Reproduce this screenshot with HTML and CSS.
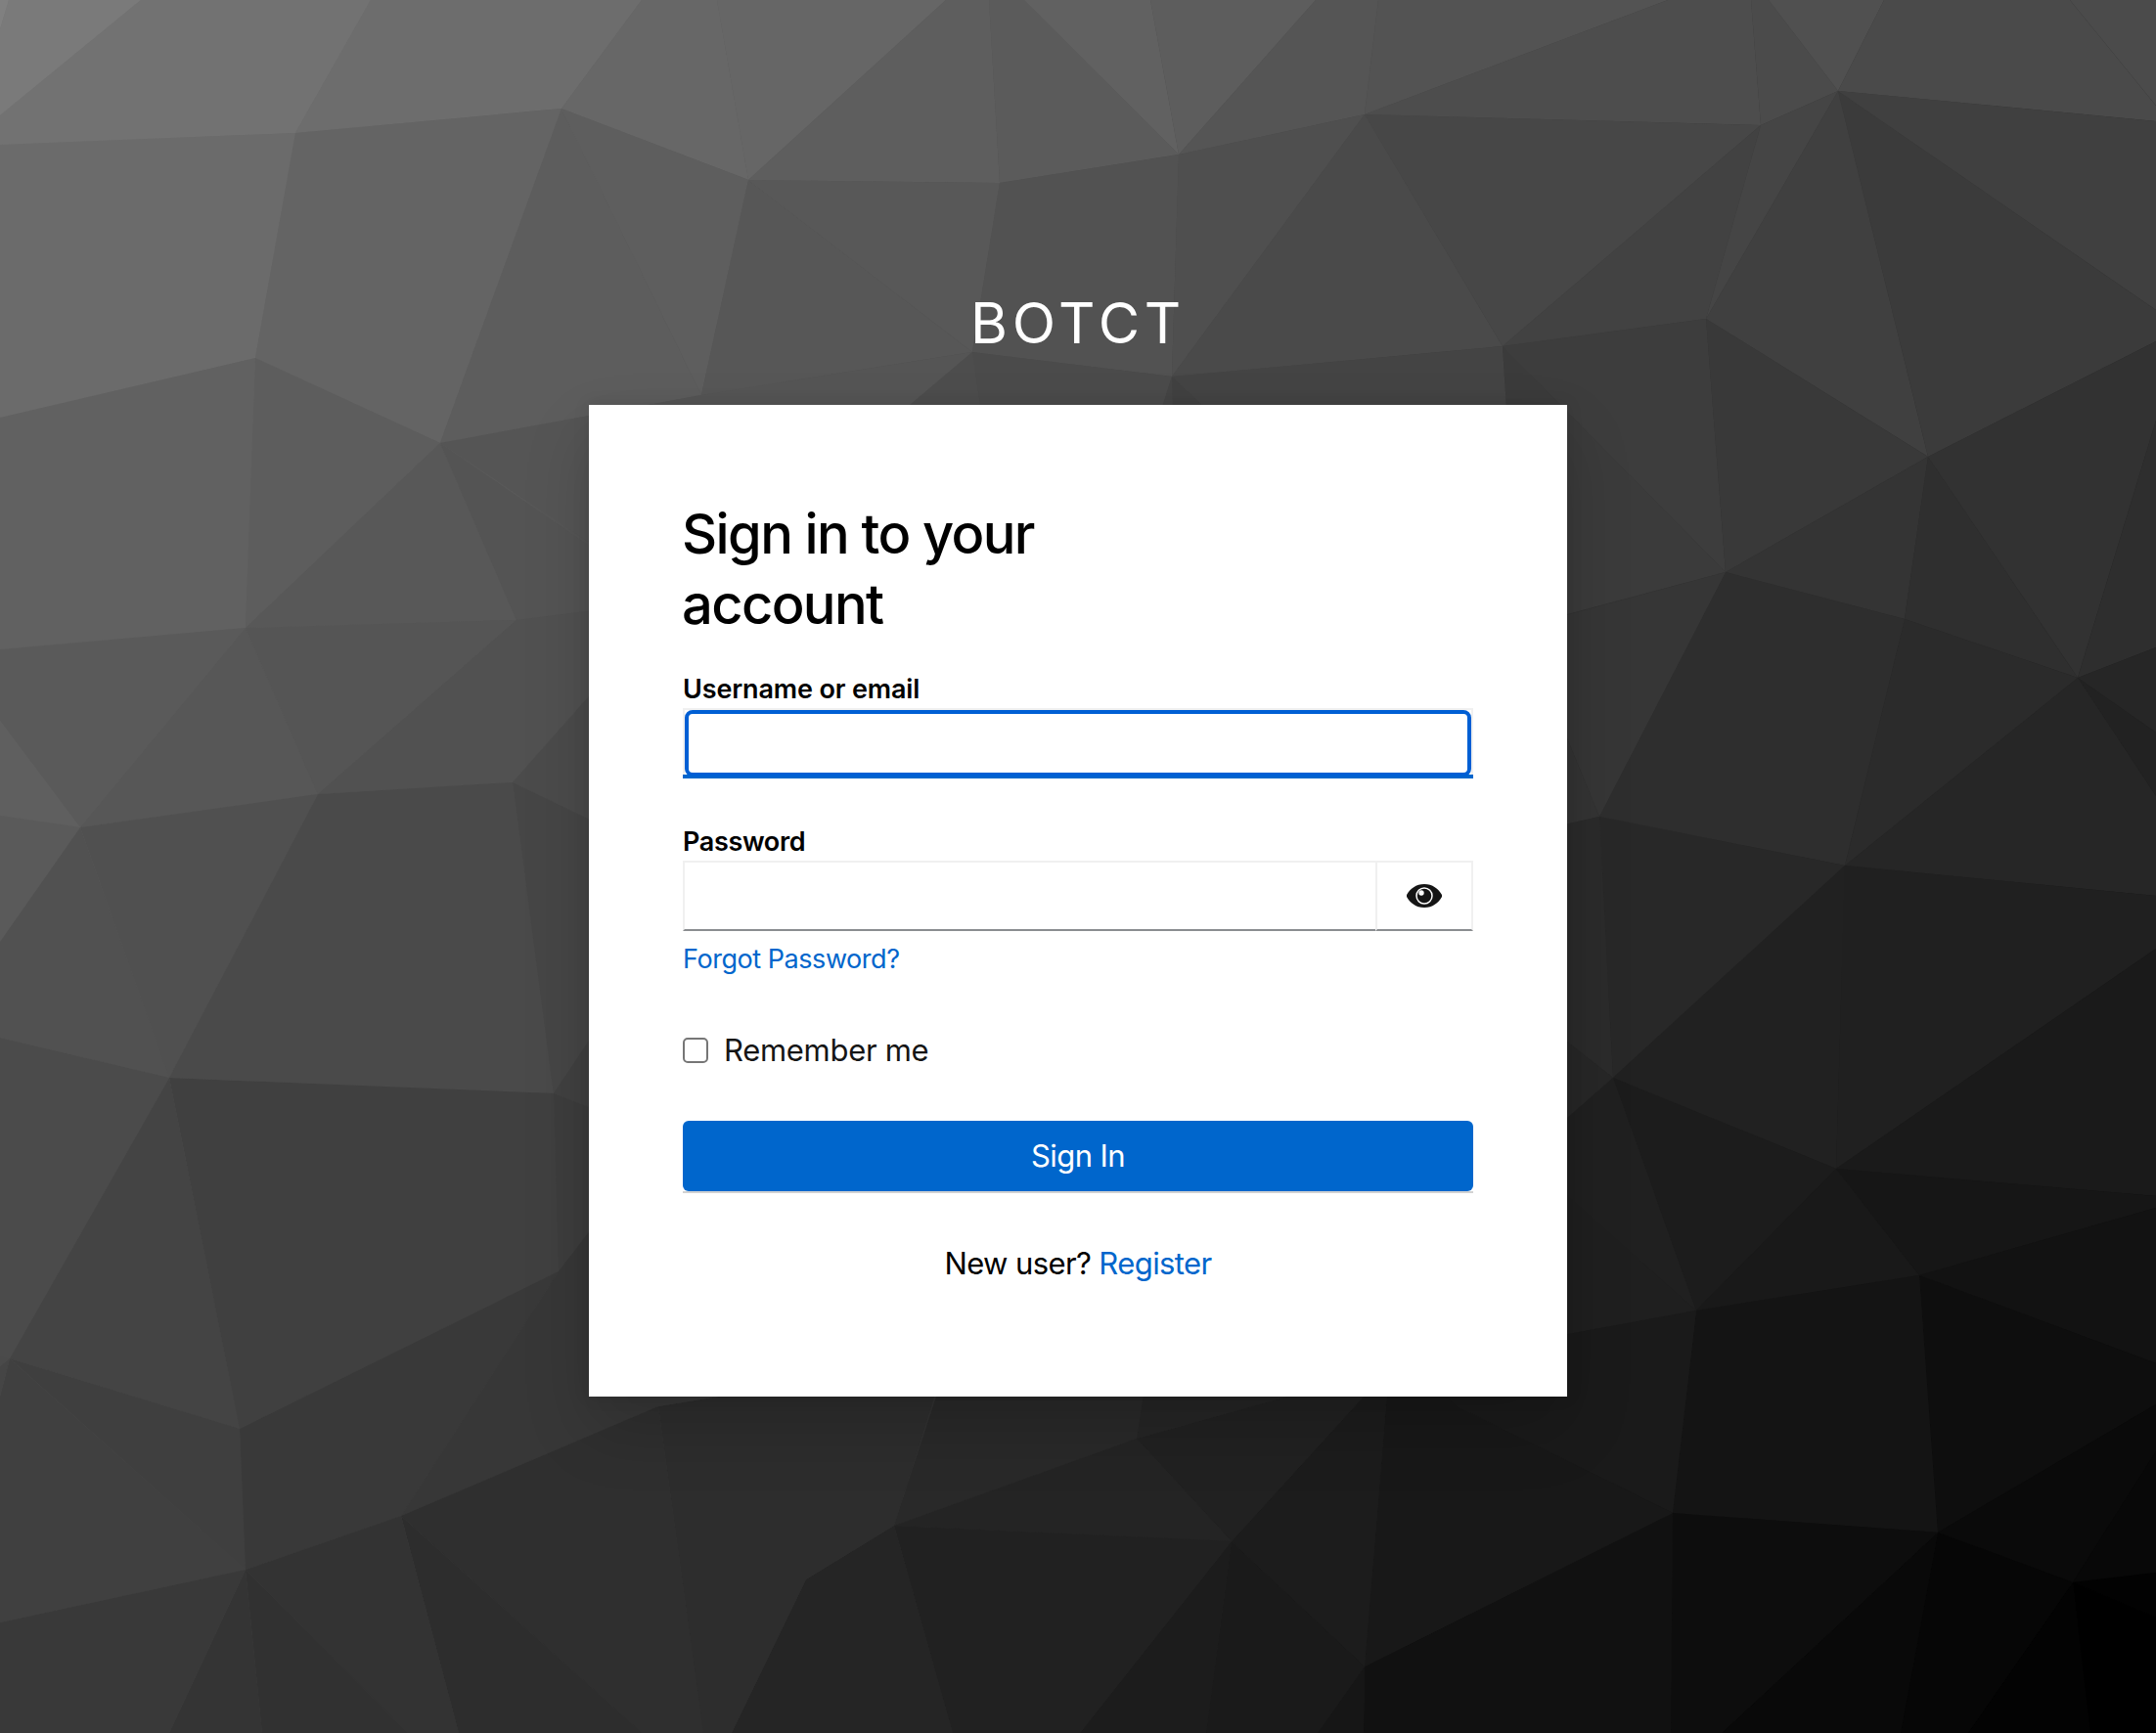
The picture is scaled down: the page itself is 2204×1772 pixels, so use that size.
FILE: index.html
```html
<!DOCTYPE html>
<html lang="en">
<head>
<meta charset="utf-8">
<title>Sign in to BOTCT</title>
<link rel="stylesheet" href="styles.css">
</head>
<body class="login-page">
<svg class="backdrop" viewBox="0 0 2204 1772" preserveAspectRatio="xMidYMid slice" aria-hidden="true">
<!-- top row -->
<path fill="#808080" d="M0 0 9 0 0 30z"/>
<path fill="#7a7a7a" d="M9 0 144 0 0 118 0 30z"/>
<path fill="#727272" d="M144 0 379 0 302 136 0 148 0 118z"/>
<path fill="#6d6d6d" d="M379 0 656 0 574 111 302 136z"/>
<path fill="#676767" d="M656 0 733 0 765 184 574 111z"/>
<path fill="#666666" d="M733 0 967 0 765 184z"/>
<path fill="#5e5e5e" d="M967 0 1011 0 1022 187 765 184z"/>
<path fill="#5b5b5b" d="M1011 0 1047 0 1205 158 1022 187z"/>
<path fill="#616161" d="M1047 0 1176 0 1205 158z"/>
<path fill="#5d5d5d" d="M1176 0 1345 0 1205 158z"/>
<path fill="#555555" d="M1345 0 1409 0 1395 117 1205 158z"/>
<path fill="#535353" d="M1409 0 1705 0 1395 117z"/>
<path fill="#4d4d4d" d="M1705 0 1790 0 1800 128 1395 117z"/>
<path fill="#4b4b4b" d="M1790 0 1808 0 1879 93 1800 128z"/>
<path fill="#505050" d="M1808 0 1926 0 1879 93z"/>
<path fill="#4a4a4a" d="M1926 0 2116 0 2204 108 2204 124 1879 93z"/>
<path fill="#4b4b4b" d="M2116 0 2204 0 2204 108z"/>
<!-- second row -->
<path fill="#6b6b6b" d="M0 148 302 136 261 366 0 427z"/>
<path fill="#646464" d="M302 136 574 111 450 453 261 366z"/>
<path fill="#5d5d5d" d="M574 111 717 404 450 453z"/>
<path fill="#5e5e5e" d="M574 111 765 184 717 404z"/>
<path fill="#575757" d="M765 184 994 360 717 404z"/>
<path fill="#585858" d="M765 184 1022 187 994 360z"/>
<path fill="#525252" d="M1022 187 1205 158 1198 385 994 360z"/>
<path fill="#4f4f4f" d="M1205 158 1395 117 1198 385z"/>
<path fill="#4a4a4a" d="M1395 117 1536 354 1198 385z"/>
<path fill="#474747" d="M1395 117 1800 128 1536 354z"/>
<path fill="#424242" d="M1800 128 1744 326 1536 354z"/>
<path fill="#454545" d="M1800 128 1879 93 1744 326z"/>
<path fill="#404040" d="M1879 93 1971 467 1744 326z"/>
<path fill="#3b3b3b" d="M1879 93 2204 317 2204 349 1971 467z"/>
<path fill="#404040" d="M1879 93 2204 124 2204 317z"/>
<!-- behind the card's top edge -->
<path fill="#555555" d="M450 453 717 404 994 360 850 482 640 580z"/>
<path fill="#4d4d4d" d="M994 360 850 482 1012 480z"/>
<path fill="#4b4b4b" d="M994 360 1012 480 1168 480 1198 385z"/>
<path fill="#454545" d="M1198 385 1168 480 1201 480z"/>
<path fill="#414141" d="M1198 385 1201 480 1300 480z"/>
<path fill="#444444" d="M1198 385 1300 480 1544 480 1536 354z"/>
<!-- right side -->
<path fill="#3b3b3b" d="M1536 354 1764 585 1602 628 1560 640 1544 480z"/>
<path fill="#3d3d3d" d="M1536 354 1744 326 1764 585z"/>
<path fill="#393939" d="M1744 326 1971 467 1764 585z"/>
<path fill="#343434" d="M1971 467 1947 633 1764 585z"/>
<path fill="#2f2f2f" d="M1971 467 2124 693 1947 633z"/>
<path fill="#323232" d="M1971 467 2204 349 2204 430 2124 693z"/>
<path fill="#2e2e2e" d="M2204 430 2204 662 2124 693z"/>
<path fill="#262626" d="M2204 662 2204 749 2124 693z"/>
<path fill="#222222" d="M2204 749 2204 814 2124 693z"/>
<path fill="#262626" d="M2124 693 2204 814 2204 916 1886 885z"/>
<path fill="#2b2b2b" d="M1947 633 2124 693 1886 885z"/>
<path fill="#2e2e2e" d="M1764 585 1947 633 1886 885 1635 835z"/>
<path fill="#363636" d="M1764 585 1635 835 1602 755 1560 640z"/>
<path fill="#343434" d="M1602 755 1635 835 1560 852 1560 640z"/>
<path fill="#282828" d="M1635 835 1886 885 1649 1102z"/>
<path fill="#2b2b2b" d="M1635 835 1649 1102 1602 1065 1560 1032 1560 852z"/>
<path fill="#212121" d="M1886 885 1877 1195 1649 1102z"/>
<path fill="#202020" d="M1886 885 2204 916 2204 970 1877 1195z"/>
<path fill="#1a1a1a" d="M2204 970 2204 1223 1877 1195z"/>
<path fill="#272727" d="M1560 1032 1649 1102 1560 1180z"/>
<path fill="#202020" d="M1649 1102 1734 1340 1560 1185 1560 1180z"/>
<path fill="#1c1c1c" d="M1649 1102 1877 1195 1734 1340z"/>
<path fill="#1f1f1f" d="M1560 1185 1734 1340 1560 1372z"/>
<path fill="#191919" d="M1877 1195 1962 1304 1734 1340z"/>
<path fill="#161616" d="M1877 1195 2204 1223 2204 1235 1962 1304z"/>
<path fill="#121212" d="M2204 1235 2204 1394 1962 1304z"/>
<path fill="#0e0e0e" d="M1962 1304 2204 1394 2204 1436 1981 1567z"/>
<path fill="#141414" d="M1734 1340 1962 1304 1981 1567 1710 1547z"/>
<path fill="#1a1a1a" d="M1734 1340 1710 1547 1491 1439 1450 1400 1560 1372z"/>
<path fill="#0a0a0a" d="M2204 1436 2204 1484 2119 1618 1981 1567z"/>
<path fill="#080808" d="M2204 1484 2204 1608 2119 1618z"/>
<path fill="#020202" d="M2204 1608 2204 1654 2119 1618z"/>
<path fill="#000000" d="M2204 1654 2204 1772 2137 1772 2119 1618z"/>
<path fill="#030303" d="M2119 1618 2137 1772 2012 1772z"/>
<path fill="#060606" d="M1981 1567 2119 1618 2012 1772 1943 1772z"/>
<path fill="#090909" d="M1981 1567 1943 1772 1760 1772z"/>
<path fill="#0d0d0d" d="M1710 1547 1981 1567 1760 1772 1708 1772z"/>
<!-- bottom -->
<path fill="#111111" d="M1710 1547 1708 1772 1394 1772 1395 1704z"/>
<path fill="#181818" d="M1710 1547 1395 1704 1420 1400 1450 1400 1491 1439z"/>
<path fill="#161616" d="M1395 1704 1394 1772 1347 1772z"/>
<path fill="#1a1a1a" d="M1259 1576 1395 1704 1347 1772 1233 1772z"/>
<path fill="#1c1c1c" d="M1259 1576 1233 1772 1104 1772z"/>
<path fill="#1c1c1c" d="M1259 1576 1394 1428 1394 1400 1420 1400 1395 1704z"/>
<path fill="#212121" d="M1162 1471 1316 1428 1316 1400 1394 1400 1394 1428 1259 1576z"/>
<path fill="#252525" d="M1162 1471 1173 1400 1316 1400 1316 1428z"/>
<path fill="#292929" d="M914 1560 957 1428 964 1400 1173 1400 1162 1471z"/>
<path fill="#242424" d="M914 1560 1162 1471 1259 1576z"/>
<path fill="#212121" d="M914 1560 1259 1576 1104 1772 974 1772z"/>
<path fill="#252525" d="M914 1560 974 1772 748 1772 824 1615z"/>
<path fill="#2d2d2d" d="M673 1438 735 1428 964 1400 914 1560 824 1615 748 1772 719 1772z"/>
<!-- left side -->
<path fill="#616161" d="M0 427 261 366 251 642 0 664z"/>
<path fill="#5d5d5d" d="M261 366 450 453 251 642z"/>
<path fill="#585858" d="M450 453 528 634 251 642z"/>
<path fill="#545454" d="M450 453 640 584 640 620 528 634z"/>
<path fill="#5a5a5a" d="M0 664 251 642 82 846 0 737z"/>
<path fill="#5f5f5f" d="M0 737 82 846 0 834z"/>
<path fill="#5a5a5a" d="M0 834 82 846 0 963z"/>
<path fill="#575757" d="M251 642 325 812 82 846z"/>
<path fill="#555555" d="M251 642 528 634 325 812z"/>
<path fill="#515151" d="M528 634 640 620 640 669 524 800 325 812z"/>
<path fill="#4b4b4b" d="M524 800 640 669 640 856z"/>
<path fill="#515151" d="M82 846 173 1102 0 1061 0 963z"/>
<path fill="#505050" d="M82 846 325 812 173 1102z"/>
<path fill="#4a4a4a" d="M325 812 524 800 566 1118 173 1102z"/>
<path fill="#464646" d="M524 800 640 856 640 1007 566 1118z"/>
<path fill="#414141" d="M566 1118 640 1007 640 1147z"/>
<path fill="#4b4b4b" d="M0 1061 173 1102 10 1389 0 1386z"/>
<path fill="#444444" d="M173 1102 245 1461 10 1389z"/>
<path fill="#404040" d="M173 1102 566 1118 571 1300 245 1461z"/>
<path fill="#3d3d3d" d="M566 1118 640 1147 640 1210 571 1300z"/>
<path fill="#4a4a4a" d="M0 1386 10 1389 0 1397z"/>
<path fill="#454545" d="M0 1397 10 1389 0 1428z"/>
<path fill="#3f3f3f" d="M10 1389 245 1461 251 1605z"/>
<path fill="#404040" d="M10 1389 251 1605 0 1659 0 1428z"/>
<path fill="#393939" d="M245 1461 571 1300 410 1550 251 1605z"/>
<path fill="#373737" d="M571 1300 640 1210 640 1400 735 1400 735 1428 673 1438 410 1550z"/>
<path fill="#2f2f2f" d="M410 1550 673 1438 719 1772 656 1772z"/>
<path fill="#2d2d2d" d="M410 1550 656 1772 469 1772z"/>
<path fill="#333333" d="M251 1605 410 1550 469 1772 417 1772z"/>
<path fill="#313131" d="M251 1605 417 1772 268 1772z"/>
<path fill="#343434" d="M251 1605 268 1772 173 1772z"/>
<path fill="#393939" d="M0 1659 251 1605 173 1772 0 1772z"/>
</svg>

<div class="login">
  <header class="brand">BOTCT</header>
  <main class="card">
    <h1 class="card-title">Sign in to your account</h1>
    <form class="form">
      <label class="label" for="username">Username or email</label>
      <div class="field field-focused"><input class="input" id="username" type="text"></div>

      <label class="label label-password" for="password">Password</label>
      <div class="password-group">
        <input class="input password-input" id="password" type="password">
        <button class="reveal" type="button" aria-label="Show password">
          <svg class="eye" viewBox="0 0 36 24">
            <path fill="#151515" d="M18 0C9.600 0 3.400 5 .3 10.500a3 3 0 0 0 0 3C3.400 19 9.600 24 18 24s14.600-5 17.700-10.500a3 3 0 0 0 0-3C32.600 5 26.400 0 18 0z"/>
            <circle cx="18" cy="12" r="8" fill="#151515" stroke="#fff" stroke-width="1.500"/>
            <circle cx="15" cy="9" r="2.700" fill="#fff"/>
          </svg>
        </button>
      </div>
      <a class="link forgot">Forgot Password?</a>

      <label class="remember"><input class="checkbox" type="checkbox"><span class="remember-text">Remember me</span></label>
      <div class="submit-row"><button class="submit" type="button"><span class="submit-text">Sign In</span></button></div>
    </form>
    <p class="signup"><span class="signup-text">New user?</span> <a class="link">Register</a></p>
  </main>
</div>
</body>
</html>
```
FILE: styles.css
```css
* {
  box-sizing: border-box;
}

.login-page {
  margin: 0;
  min-height: 1772px;
  background: linear-gradient(130deg, #787878, #000);
  color: #151515;
  font-family: Inter, "Liberation Sans", sans-serif;
  font-size: 31px;
  line-height: 48px;
  overflow: hidden;
}

/* faceted artwork under the form */
.backdrop {
  position: absolute;
  inset: 0;
  width: 100%;
  height: 100%;
}

.login {
  position: relative;
  width: 1000px;
  margin: 0 auto;
  padding-top: 294px;
}

.brand {
  height: 120px;
  color: #fff;
  font-size: 58px;
  line-height: 72px;
  letter-spacing: 4.8px;
  text-align: center;
}

.card {
  height: 1014px;
  padding: 96px;
  background: #fff;
  box-shadow: 0 32px 64px rgba(3, 3, 3, .16), 0 0 16px rgba(3, 3, 3, .1);
}

.card-title {
  width: 460px;
  margin: 0 0 32px -1px;
  color: #000;
  font-size: 56px;
  font-weight: 500;
  line-height: 72px;
  letter-spacing: -1.6px;
}

.form {
  display: flex;
  flex-direction: column;
}

.label {
  height: 38px;
  color: #000;
  font-size: 27px;
  font-weight: 600;
  line-height: 38px;
  letter-spacing: -.15px;
}

.field {
  height: 72px;
  padding: 2px;
}

.field-focused {
  box-shadow: inset 0 -4px #06c, inset 0 0 0 2px #f0f0f0;
}

.input {
  display: block;
  width: 100%;
  height: 100%;
  padding: 0 16px;
  border: 0;
  outline: 0;
  background: transparent;
  font: inherit;
}

.field-focused .input {
  border: 4px solid #005fd4;
  border-radius: 8px;
}

.label-password {
  margin-top: 46px;
  letter-spacing: -.35px;
}

.password-group {
  display: flex;
  height: 72px;
}

.password-input {
  flex: 1;
  border: 2px solid #f0f0f0;
  border-right: 0;
  border-bottom-color: #8a8d90;
}

.reveal {
  display: flex;
  align-items: center;
  justify-content: center;
  width: 100px;
  padding: 0;
  border: 2px solid #f0f0f0;
  border-bottom-color: #8a8d90;
  background: #fff;
}

.eye {
  width: 36px;
  height: 24px;
}

.link {
  color: #06c;
  text-decoration: none;
}

.forgot {
  margin-top: 8px;
  font-size: 27px;
  line-height: 42px;
  letter-spacing: -.45px;
}

.remember {
  display: flex;
  align-items: center;
  height: 48px;
  margin-top: 48px;
  letter-spacing: -.3px;
}

.checkbox {
  appearance: none;
  width: 26px;
  height: 26px;
  margin: 0 16px 0 0;
  border: 2px solid #767676;
  border-radius: 5px;
  background: #fff;
}

.submit-row {
  height: 74px;
  margin-top: 48px;
  border-bottom: 2px solid #d2d2d2;
}

.submit {
  width: 100%;
  height: 72px;
  padding: 0;
  border: 0;
  border-radius: 6px;
  background: #06c;
  color: #fff;
  font: inherit;
  letter-spacing: -.55px;
}

.signup {
  margin: 48px 0 0;
  text-align: center;
  color: #000;
  letter-spacing: -.6px;
}
```
